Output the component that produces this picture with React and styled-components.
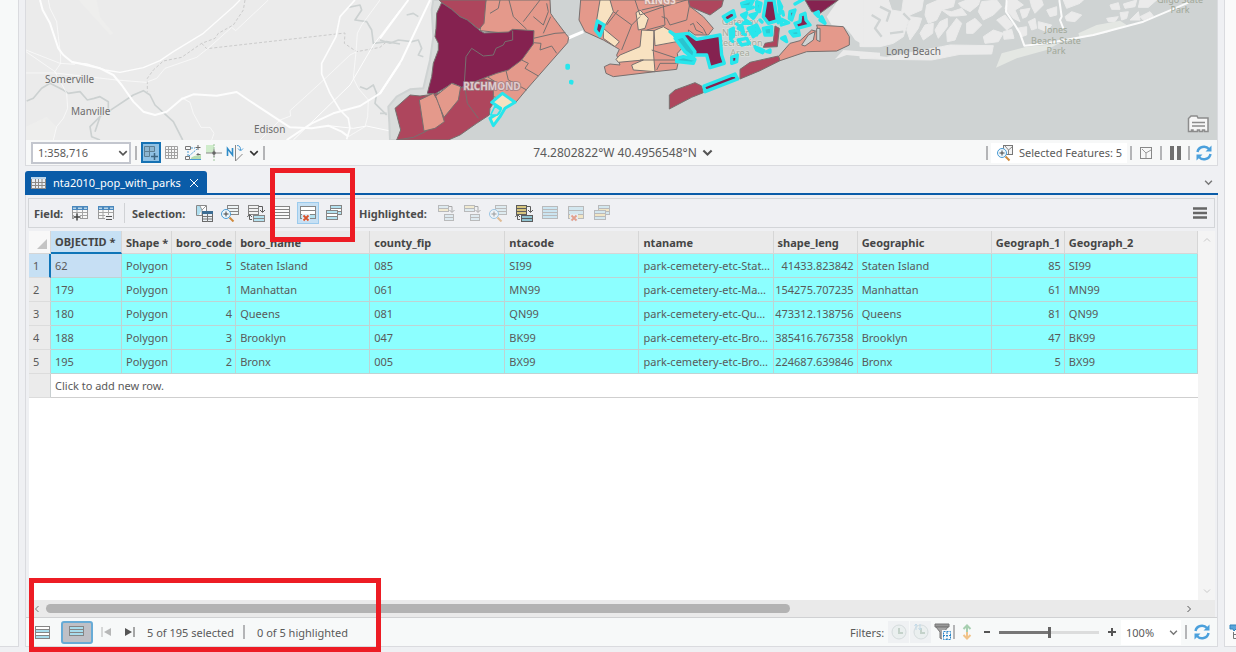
import React from "react";
import styled, { createGlobalStyle, css } from "styled-components";

const ink = "#5a5a5a";
const line = "#d3d5d8";
const blue = "#0a5ca8";

const Global = createGlobalStyle`
  *, *::before, *::after { box-sizing: border-box; }
  body { margin: 0; background: #eff0f3; overflow: hidden; }
  body, button, select, input { font-family: "Noto Sans", "Open Sans", sans-serif; font-size: 11px; color: ${ink}; }
`;

const Page = styled.div`
  display: flex;
  gap: 6px;
  min-height: 100vh;
  padding-bottom: 5px;
`;
const LeftDock = styled.aside`
  flex: 0 0 19px;
  background: #f7f9f9;
  border: 1px solid #dadbdf;
  border-width: 0 1px 1px 0;
`;
const RightDock = styled.aside`
  flex: 0 0 12px;
  display: flex;
  flex-direction: column;
  justify-content: flex-end;
  padding: 0 0 6px 4px;
  overflow: hidden;
  background: #fafafa;
  border: 1px solid #dadbdf;
  border-width: 0 0 1px 1px;
`;
const Main = styled.main`
  position: relative;
  flex: 1;
  min-width: 0;
  display: flex;
  flex-direction: column;
`;
const MapView = styled.section`
  display: flex;
  flex-direction: column;
  border: 1px solid #dadbdf;
  border-top: 0;
`;
const MapCanvas = styled.div`
  position: relative;
  height: 140px;
  overflow: hidden;
  background: #ebebeb;
`;
const MapSvg = styled.svg`
  display: block;
  width: 100%;
  height: 100%;
`;
const MapBadge = styled.button`
  position: absolute;
  right: 8px;
  bottom: 6px;
  width: 22px;
  height: 20px;
  padding: 0;
  border: 0;
  background: none;
`;
const ViewBar = styled.div`
  display: flex;
  align-items: center;
  height: 25px;
  padding: 0 2px 0 5px;
  background: #f7f8f8;
`;
const Sep = styled.span`
  flex: none;
  width: 2px;
  height: 14px;
  background: #b4b5b7;
`;
const Group = styled.div`
  display: flex;
  align-items: center;
  gap: ${(p) => p.$gap || 0}px;
  flex: ${(p) => (p.$grow ? "1 1 0" : "none")};
  justify-content: ${(p) => p.$align || "flex-start"};
`;
const Picker = styled.label`
  position: relative;
  display: flex;
  align-items: center;
  svg { position: absolute; right: 3px; pointer-events: none; }
`;
const Select = styled.select`
  appearance: none;
  width: ${(p) => p.$w}px;
  height: ${(p) => p.$h}px;
  padding: 0 0 0 5px;
  border: ${(p) => (p.$plain ? "0" : "2px solid #c3c6ce")};
  border-radius: 0;
  background: #fff;
`;
const ToolButton = styled.button`
  display: flex;
  align-items: center;
  justify-content: center;
  flex: none;
  width: ${(p) => p.$w || 22}px;
  height: ${(p) => p.$h || 22}px;
  padding: 0;
  border: 0;
  background: none;
  opacity: ${(p) => (p.disabled ? 0.5 : 1)};
  ${(p) => p.$on && css`background: #c6e0f4; border: 1px solid #9ccbed;`}
  ${(p) => p.$strong && css`background: #8fc1e4; border: 2px solid #1672b4;`}
  ${(p) => p.$tile && css`background: #e9ebee;`}
  ${(p) => p.$toggle && css`background: #bfc0c6; border: 2px solid #67abd6; border-radius: 3px;`}
`;
const TextButton = styled.button`
  display: flex;
  align-items: center;
  gap: 5px;
  height: 20px;
  padding: 0 5px;
  border: 0;
  background: ${(p) => (p.$white ? "#fff" : "none")};
  font-size: ${(p) => (p.$large ? 12 : 11)}px;
  white-space: nowrap;
`;
const TablePane = styled.section`
  flex: 1;
  display: flex;
  flex-direction: column;
  margin-top: 6px;
`;
const TabStrip = styled.div`
  display: flex;
  justify-content: space-between;
  align-items: center;
  height: 23px;
  padding-right: 2px;
  border-bottom: 2px solid ${blue};
`;
const Tab = styled.div`
  display: flex;
  align-items: center;
  gap: 6px;
  height: 23px;
  padding: 0 6px;
  border-radius: 3px 3px 0 0;
  background: ${blue};
  color: #fff;
`;
const PaneBody = styled.div`
  flex: 1;
  display: flex;
  flex-direction: column;
  border: 1px solid #dadbdf;
  border-top: 0;
`;
const ToolBar = styled.div`
  display: flex;
  align-items: center;
  height: 30px;
  margin: 3px 2px;
  padding: 0 3px 0 5px;
  background: #eff0f3;
  border: 1px solid ${line};
`;
const ToolLabel = styled.span`
  width: ${(p) => p.$w}px;
  font-weight: 700;
  white-space: nowrap;
  color: #4c4c4c;
`;
const ToolDivider = styled.span`
  width: 1px;
  height: 20px;
  margin: 0 7px;
  background: #d0d2d5;
`;
const GridArea = styled.div`
  flex: 1;
  display: flex;
  align-items: stretch;
  margin: 0 2px 0 3px;
  background: #fff;
`;
const GridScroller = styled.div`
  flex: 1;
  min-width: 0;
  overflow: hidden;
`;
const Table = styled.table`
  width: 100%;
  table-layout: fixed;
  border-collapse: separate;
  border-spacing: 0;
`;
const HeadCell = styled.th`
  height: 23px;
  padding: 0 0 0 4px;
  background: ${(p) => (p.$current ? "#c6e0f4" : "#eaeaea")};
  border-right: 1px solid #d6d6d6;
  border-bottom: ${(p) => (p.$current ? "2px solid #0f75b8" : "1px solid #d6d6d6")};
  text-align: left;
  white-space: nowrap;
  color: #454545;
`;
const CornerCell = styled(HeadCell)`
  padding: 4px 3px 0 0;
  background: #f8f8f8;
  svg { display: block; margin-left: auto; }
`;
const RowHead = styled.th`
  height: 24px;
  padding: 0 0 0 4px;
  background: ${(p) => (p.$current ? "#c6e0f4" : "#ebebeb")};
  border-right: ${(p) => (p.$current ? "2px solid #0f75b8" : "1px solid #c9cfd0")};
  border-bottom: 1px solid #dcdcdc;
  text-align: left;
  font-weight: 400;
`;
const Cell = styled.td`
  height: 24px;
  padding: ${(p) => (p.$num ? "0 3px 0 0" : "0 2px 0 4px")};
  background: ${(p) => (p.$current ? "#c6dff4" : "#8cffff")};
  border-right: 1px solid #bfd3d3;
  border-bottom: 1px solid #bfd3d3;
  text-align: ${(p) => (p.$num ? "right" : "left")};
  white-space: nowrap;
  overflow: hidden;
  text-overflow: ellipsis;
`;
const NewRowCell = styled.td`
  height: 24px;
  padding: 0 4px;
  border-bottom: 1px solid #cfcfcf;
`;
const VScroll = styled.div`
  flex: 0 0 17px;
  display: flex;
  flex-direction: column;
  justify-content: space-between;
  align-items: center;
  padding: 5px 0;
  background: #f4f4f4;
`;
const HScroll = styled.div`
  display: flex;
  align-items: center;
  gap: 5px;
  height: 17px;
  margin: 0 2px;
  padding: 0 22px 0 5px;
  background: #eaeaea;
`;
const HTrack = styled.div`
  flex: 1;
  display: flex;
`;
const HThumb = styled.div`
  width: 65.6%;
  height: 9px;
  border-radius: 5px;
  background: #b3b3b3;
`;
const StatusBar = styled.div`
  display: flex;
  align-items: center;
  height: 29px;
  padding: 0 4px 0 6px;
  border-top: 1px solid #d0d1d3;
  background: #f7f9f9;
  white-space: nowrap;
`;
const StatusText = styled.span`
  width: ${(p) => p.$w}px;
`;
const Slider = styled.input`
  appearance: none;
  width: 100px;
  height: 12px;
  margin: 0 4px;
  background: linear-gradient(to right, #777 50%, #dcdddd 50%) center / 100% 3px no-repeat;
  &::-webkit-slider-thumb {
    appearance: none;
    width: 3px;
    height: 11px;
    background: #666;
  }
`;
const Callout = styled.div`
  position: absolute;
  border: 5px solid #ed1c24;
  pointer-events: none;
  ${(p) => p.$at === "tools"
    ? css`left: 245px; top: 168px; width: 85px; height: 74px;`
    : css`left: 4px; bottom: -5px; width: 352px; height: 74px;`}
`;

/* ---------- icons ---------- */
const Icon = ({ w = 18, h = 18, children }) => (
  <svg width={w} height={h} viewBox={`0 0 ${w} ${h}`} fill="none" aria-hidden="true">{children}</svg>
);
const Chevron = ({ dir = "down", color = "#555", s = 8, t = 1.3 }) => {
  const turn = { down: 0, up: 180, left: 90, right: -90 }[dir];
  return (
    <svg width={s} height={s} viewBox="0 0 8 8" fill="none" aria-hidden="true">
      <path d="M1 2.5 4 5.5 7 2.5" stroke={color} strokeWidth={t} transform={`rotate(${turn} 4 4)`} />
    </svg>
  );
};
const Rows = ({ x, y, w, n, step = 4, fills, stroke = "#858585" }) => (
  <g stroke={stroke} shapeRendering="crispEdges">
    {Array.from({ length: n }, (_, i) => (
      <rect key={i} x={x + 0.5} y={y + 0.5 + i * step} width={w - 1} height={step} fill={fills[i % fills.length]} />
    ))}
  </g>
);
const FieldIcon = ({ mark }) => (
  <Icon>
    <rect x="1.5" y="2.5" width="15" height="12" fill="#f8f8f8" stroke="#999" />
    <path d="M1 2h16v4H1z" fill="#4a88bd" />
    <path d="M2 3.500h3v1.500H2zM7 3.500h4v1.500H7zM13 3.500h3v1.500h-3z" fill="#b9d6ea" />
    <path d="M2 8.500h14M2 11.500h14M6 6v8M11.500 6v8" stroke="#a5a5a5" />
    {mark === "add" ? (
      <><path d="M3 10h6v7H3z" fill="#eff0f3" /><path d="M6 9.500v7M2.500 13h7" stroke="#444" strokeWidth="1.500" /></>
    ) : (
      <><path d="M8 11h8v6H8z" fill="#eff0f3" /><path d="M9 12.500h6M9 15.500h6" stroke="#555" /></>
    )}
  </Icon>
);
const SelectByAttr = () => (
  <Icon>
    <path d="M1.500 1.500h10v10h-10z" fill="#fff" stroke="#888" />
    <path d="M2 2h3l2 4-3 5H2z" fill="#b0dff0" /><path d="M5 2l2 4 4-4M7 6v5" stroke="#999" />
    <rect x="7.500" y="7.500" width="10" height="10" fill="#e9eff3" stroke="#6a6a6a" />
    <path d="M7 7h11v3H7z" fill="#3d6d93" /><path d="M8 12.500h9M8 15h9M12.500 10v8" stroke="#777" />
  </Icon>
);
const Magnifier = ({ x, y }) => (
  <g transform={`translate(${x} ${y})`}>
    <path d="M8.500 8.500l4 4" stroke="#d08a3c" strokeWidth="2" />
    <circle cx="5" cy="5" r="4.500" fill="#eef7fc" stroke="#4a9bd4" />
    <path d="M5 2.500v5M2.500 5h5" stroke="#444" />
  </g>
);
const ZoomRows = ({ fill = "#eef4f6" }) => (
  <Icon><Rows x={6} y={1} w={12} n={3} step={3} fills={[fill]} /><Magnifier x={0} y={5} /></Icon>
);
const Switch = ({ fills = ["#f2f2f2", "#b4e2f0"], stroke }) => (
  <Icon>
    <Rows x={1} y={1} w={11} n={3} step={3} fills={[fills[0]]} stroke={stroke} />
    <Rows x={6} y={11} w={12} n={2} step={3} fills={[fills[1]]} stroke={stroke} />
    <path d="M12 2.500h3.500V8M13 6l2.500 2.500L18 6M5 15.500H2.500V11M0.300 13l2.200-2.500L5 13" stroke="#5c5c5c" />
  </Icon>
);
const MoveRows = ({ fills }) => (
  <Icon>
    <Rows x={1} y={1} w={11} n={2} step={3} fills={fills} />
    <Rows x={7} y={10} w={10} n={2} step={3} fills={["#cfe6ee"]} />
    <path d="M12 2.500h3V8M12.500 6l2.500 2.500L17.500 6" stroke="#666" />
  </Icon>
);
const SelectAll = ({ fill = "#fafafa" }) => (
  <Icon><Rows x={1} y={2} w={16} n={4} step={3} fills={[fill]} /></Icon>
);
const ClearRows = ({ fills = ["#fff", "#fff", "#b4e2f0"] }) => (
  <Icon>
    <Rows x={1} y={2} w={16} n={3} step={4} fills={fills} />
    <path d="M3 10h8v7H3z" fill="#dfe9f2" />
    <path d="M4.500 11.500l5 5M9.500 11.500l-5 5" stroke="#d9532c" strokeWidth="1.800" />
  </Icon>
);
const StackRows = ({ fills = ["#b4e2f0", "#fff"] }) => (
  <Icon>
    <Rows x={5} y={1} w={12} n={3} step={3} fills={fills} />
    <Rows x={1} y={6} w={12} n={3} step={3} fills={fills} />
  </Icon>
);
const Refresh = () => (
  <Icon>
    <path d="M2.500 8C3.500 2.500 10.500 1 14 5M15.500 10c-1 5.500-8 7-11.500 3" stroke="#4ba0dc" strokeWidth="2.500" />
    <path d="M16.500 1.500v6H10.500zM1.500 16.500v-6h6z" fill="#4ba0dc" />
  </Icon>
);
const TableIcon = () => (
  <Icon w={16} h={14}>
    <rect x="0.500" y="1.500" width="14" height="11" fill="#e8eef4" stroke="#8e8a86" />
    <path d="M0 1h15v2H0z" fill="#bcd7ec" />
    <path d="M1 6.500h13M1 9.500h13M4.500 3v9M7.500 3v9M11 3v9" stroke="#8e8a86" />
  </Icon>
);
const Panes = () => (
  <Icon w={16} h={18}>
    <path d="M1.500 2.500h5v5h-5zM6.500 2.500h5v5h-5zM1.500 7.500h5v5h-5z" stroke="#5d7f93" fill="#8db6d0" />
    <path d="M11.500 9v7M8 12.500h7" stroke="#3d6580" strokeWidth="1.500" />
  </Icon>
);
const Lattice = () => (
  <Icon><path d="M2.500 2.500h12v12h-12zM5.500 2v12M8.500 2v12M11.500 2v12M2 5.500h12M2 8.500h12M2 11.500h12" stroke="#a2a2a2" /></Icon>
);
const Snapping = () => (
  <Icon>
    <path d="M1.500 2.500h5v3h-5zM1.500 12.500h4v3h-4z" stroke="#777" />
    <path d="M7 4h4M4 12V6M5 12l8-7" stroke="#4a9bd4" strokeDasharray="2 1" />
    <path d="M14 1v5M11.500 3.500h5M14 9v3M12.500 10.500h4" stroke="#666" />
    <path d="M7 14c3-3 6-2 10-3v5H7z" fill="#b5dcb0" /><path d="M6 15.500h11" stroke="#4a9bd4" />
  </Icon>
);
const GridOrigin = () => (
  <Icon><path d="M1 1h8v8H1z" fill="#cfeccb" /><path d="M9 0v17" stroke="#9cc49a" strokeDasharray="2 1" /><path d="M1 9h16M9 5v8" stroke="#888" /><circle cx="9" cy="9" r="1.800" fill="#666" /></Icon>
);
const NorthUp = () => (
  <Icon>
    <path d="M1.500 12V4.500l5 6.500V4" stroke="#2f8cc8" strokeWidth="1.600" />
    <path d="M9.500 1v16l7-7" stroke="#888" /><path d="M9.500 1v15" stroke="#888" />
    <path d="M11 1.500c3 0 3.500 2 3.500 4.500M12 4.500L14.500 7 17 4.500" stroke="#4a9bd4" />
  </Icon>
);
const FeatureZoom = () => (
  <Icon><rect x="7.500" y="1.500" width="9" height="9" fill="#f4f4f4" stroke="#777" /><path d="M9 2l3.500 4L16 3M12.500 6v4" stroke="#888" /><Magnifier x={1} y={4} /></Icon>
);
const MapFrame = () => (
  <Icon w={14} h={14}><rect x="1.500" y="1.500" width="11" height="11" stroke="#888" /><path d="M3 3l4 4v5M7 7l5-3" stroke="#999" /></Icon>
);
const Funnel = () => (
  <Icon>
    <path d="M1 1h14v3H1z" fill="#999" stroke="#777" /><path d="M2 4h12l-4 5v8l-4-2V9z" fill="#a5a5a5" stroke="#777" />
    <path d="M8 7h10v11H8z" fill="#f7f9f9" /><path d="M9.500 8.500h7v8h-7zM13 9v8M9 12.500h8" stroke="#2b86c8" strokeDasharray="2 1" />
  </Icon>
);
const ClockIcon = ({ arrows }) => (
  <Icon><circle cx="9" cy="9" r="7" fill="#dfe7e6" stroke="#b4bfc2" /><path d="M9 5v5h4" stroke="#93ac9c" strokeWidth="2" />{arrows && <path d="M4 1v6M8 1v6M2.500 3L4 1l1.500 2M6.500 5L8 7l1.500-2" stroke="#8db9d6" />}</Icon>
);
const UpDown = () => (
  <Icon w={12}><path d="M6 4v5" stroke="#a7cfb0" strokeWidth="2" /><path d="M2.500 6L6 2.500 9.500 6" stroke="#a7cfb0" strokeWidth="2" /><path d="M6 9v5" stroke="#f1c389" strokeWidth="2" /><path d="M2.500 12L6 15.500 9.500 12" stroke="#f1c389" strokeWidth="2" /></Icon>
);

/* ---------- map ---------- */
const salmon = "#e4998b";
const crimson = "#ae465d";
const plum = "#852250";
const cream = "#f8e2c1";
const water = "#cfd3d3";
const land = "#ebebeb";

const roads = [
  ["M120 0L128 30 150 70 175 145 190 165 215 185 300 205 340 225 365 255 400 305 430 335 465 345 500 335 545 297 580 283 650 287 710 276 745 300 870 382 935 385 985 377 1025 395 1045 410", 6],
  ["M215 188L260 192 315 210 360 217 430 203 480 182 520 155 610 100 700 20 720 0", 4],
  ["M145 0L150 25 170 65 182 170 182 190 165 215M78 150L180 190 225 193M78 155L165 215 200 280 203 325 190 355 170 380 160 420M78 219H165L350 240 438 247 470 235 495 205 590 172 630 140 695 82 707 92 805 0", 2],
  ["M545 293L570 307 580 340 603 382 630 382 642 400 635 420M780 420L840 360 872 348 870 332 960 250 1050 165 1070 155M1140 0L1085 75 1072 100 1068 155 1060 235 1075 265 1105 300 1103 350 1095 380 1045 410", 2],
  ["M1065 0L1020 50 1008 110 965 190 965 222 990 280 1020 330 1045 355 1050 385 1040 418", 5],
  ["M860 420L935 370 1000 340 1080 318 1140 280 1200 190", 6],
  ["M880 420L1050 255 1120 135 1200 30M985 377L1060 385 1100 378 1180 395", 3],
];
const streams = [
  "M80 303L100 295 125 265 150 250 190 270 205 280 240 275 262 300 282 295 300 290 325 305 325 325 300 350 285 395M325 335L400 285 430 272 450 285 465 315 520 365 548 420M300 350L270 380 275 410 300 420",
  "M1045 22L1080 15 1085 30 1065 60 1100 65 1115 90 1120 130 1160 125 1200 132M1080 260L1100 268 1120 255 1130 280 1125 310 1160 345",
];
const marsh = [
  "M0 0H85L95 30 125 35 130 0H190L185 30 150 45 130 110 100 130 60 140 0 140Z",
  "M150 50L185 55 175 85 150 120 140 90ZM200 15L235 0H285L280 20 245 30 230 60 205 70 195 45ZM195 75L220 70 218 100 190 120 180 100ZM225 90L240 65 262 55 262 80 235 115ZM260 95L290 55 305 70 285 120 262 125ZM245 30L275 35 305 25 320 45 290 48 270 48Z",
  "M295 10L320 0H360L355 15 330 35 305 22ZM365 5L410 0 425 20 400 45 370 60 355 35ZM410 60L435 45 460 75 440 90ZM320 70L345 55 365 75 340 100 320 100ZM370 110L400 90 430 100 415 125 375 130ZM430 95L455 88 462 115 432 118Z",
  "M445 0H470L490 15 465 30 480 65 460 55 435 25ZM480 30L510 25 500 50 488 55ZM510 0H545L550 15 525 40 515 20ZM470 85L500 80 500 105 485 110ZM505 65L525 55 530 85 515 90ZM535 65L575 75 560 95 535 85ZM560 30L590 20 590 45 570 50Z",
  "M610 0H670L660 10 620 25ZM615 50L635 35 665 45 645 65 620 62ZM750 15L775 8 780 28 755 28ZM790 12L830 0 825 20 795 25ZM740 55L775 50 765 65 745 65ZM780 38L805 35 800 55 785 60ZM810 60L835 35 840 60ZM840 0H890L865 22 835 22ZM840 50L870 35 880 48 850 60Z",
  "M0 165L80 172 245 140 270 135 400 137 395 162 300 163 215 180 80 178 0 175Z",
];
const statenParts = [
  [salmon, "M318 0H510L512 40 520 52 556 100 566 112 563 128 475 228 440 268 405 310 340 290 300 230 380 100 300 92Z"],
  [crimson, "M178 0H318L312 70 297 88 262 60 240 50 215 28 185 8Z"],
  [crimson, "M45 325L90 285 120 288 165 282 245 262 310 235 322 240 348 245 340 275 340 310 330 325 328 345 290 370 240 405 205 420H50L62 390Z"],
  [plum, "M170 40L185 8 215 28 240 50 262 60 300 92 312 99 385 96 398 88 462 92 460 132 425 180 385 210 350 220 310 235 245 262 218 250 165 282 142 280 155 230 160 190 175 150 175 130 165 110 168 85Z"],
  [salmon, "M118 300L160 280 175 305 193 365 165 385 132 393Z"],
  [salmon, "M167 288L215 250 242 260 235 300 192 352 175 310Z"],
];
const statenLines = [
  "M398 92V120L375 125 370 135 348 145 340 165 310 168 275 145 258 170 253 250 262 310 295 355M360 0L355 25 330 40M387 0L400 50 440 88M480 0L430 65M460 50L490 75 505 35 500 10M512 50L490 100M460 115L525 100 556 98M460 128L483 130 480 150 515 138 530 160M425 180L445 190 435 205 475 228M378 212L385 240 440 270M322 230L345 245 M50 420L100 412 140 393",
];
const kingsParts = [
  [salmon, "M62 0H385L388 18 430 50 460 85 445 105 405 105 385 90 390 115 370 140 352 160 355 185 350 208 285 215 160 230 138 220 133 200 150 192 180 195 170 165 178 148 130 120 75 95 57 60Z"],
  [cream, "M120 0H150L160 35 130 85 110 60ZM130 85L178 125 165 140 130 115ZM228 38L240 30 265 55 255 85 235 90ZM168 178L180 165 240 140 245 90 282 92 280 155 285 215 220 210 215 195 250 180 175 187ZM282 92L310 80 335 95 350 125 285 137Z"],
  [crimson, "M385 0H490L485 20 450 45 390 20Z"],
];
const kingsLines = "M160 35L215 75 185 150M215 75L240 50M225 0L240 45 305 22 380 0M245 30L310 15 315 75 260 90M140 75L175 30M305 50L320 55 330 75 380 60 388 18M275 150L350 175M240 180H360M350 190H300L290 210M390 75L400 70 408 90 430 100M410 65L430 85 440 105";
const rockaway = [
  [salmon, "M655 170L690 130 720 122 755 90 775 95 770 75 850 80 868 110 868 135 830 153 740 155 660 182Z"],
  [crimson, "M328 285L345 270 405 248 425 258 430 278 395 292 328 327ZM540 208L570 187 655 168 660 182 600 212 540 237ZM645 78L658 85 652 140 610 142 615 130 640 125Z"],
  [plum, "M735 0H835L780 40 755 35Z"],
];
const parks = [
  [plum, "M330 95L345 105 385 100 410 118 480 105 485 165 493 190 450 203 440 165 405 165 375 130Z"],
  ["#2ac4cf", "M345 115L370 108 405 155 400 175 375 155ZM350 175L370 170 405 178 400 190 350 185Z"],
  [plum, "M112 63L132 75 120 108 106 90Z"],
  [plum, "M432 258L525 222 533 237 435 275ZM490 50L520 32 525 50 500 65ZM618 0H642L652 62 625 70 610 50ZM705 70L720 65 722 45 735 40 738 60 750 75 712 85ZM585 140L612 152 608 158 590 150ZM515 172L532 165 530 185 515 190ZM690 35L705 30 695 60 688 55Z"],
  ["#2cc9d1", "M545 10L575 0H580L570 20 548 20ZM590 5L603 10 598 35 590 30ZM545 45L560 38 555 55ZM570 45L590 40 580 55ZM565 85L590 75 600 95 580 110ZM610 85L635 80 635 105 615 105ZM690 95L715 90 718 105 700 108ZM655 0L665 20 660 40ZM665 115L675 110 680 125ZM510 90L520 85 520 110 512 115ZM535 85L545 75 550 95ZM765 40L775 35 775 50ZM780 60L795 70 785 50ZM620 155L630 150V157ZM550 70L560 62 572 70ZM705 12L730 -2ZM575 90L595 85 590 105ZM655 45L662 60 655 68ZM668 35L670 45ZM530 72L538 78ZM600 60L606 66ZM562 28L580 22ZM548 100L556 104ZM512 118L518 124Z"],
  [water, "M535 120L560 115 568 130 545 135ZM665 58L686 68 664 75Z"],
  ["#37e3e8", "M21 196h4v8h-4zM32 244l4 1-1 4-3-1z"],
];

const Label = ({ x, y, children, size = 10, fill = "#6c6c6c", weight = 400, anchor = "start", halo = "none" }) => (
  <text x={x} y={y} fontSize={size} fill={fill} fontWeight={weight} textAnchor={anchor}
    stroke={halo} strokeWidth="1.500" paintOrder="stroke" fontFamily='"Noto Sans", sans-serif'>{children}</text>
);

const third = 1 / 3;
const CityMap = () => (
  <MapSvg viewBox="26 0 1191 140" preserveAspectRatio="xMidYMid slice" role="img" aria-label="Neighborhood map">
    <rect x="26" width="1191" height="140" fill={land} />
    <g transform={`scale(${third})`} fill="none" strokeLinejoin="round">
      <path d="M235 0L330 105 340 100 300 50 290 0ZM78 380L140 350 170 380 160 420H78Z" fill="#eeeeed" />
      {streams.map((d) => <path key={d} d={d} stroke="#ccd1d1" strokeWidth="5" />)}
      <path d="M735 0L730 30 700 75 655 100 645 115 605 130 545 172 490 183 460 210 442 235 442 275M605 130L620 146 1035 99 1033 130 1070 155 1140 142 1160 125" stroke="#cbcbcb" strokeWidth="3" strokeDasharray="9 6" />
      {roads.map(([d, w]) => <path key={d} d={d} stroke="#fdfdfd" strokeWidth={w} />)}
    </g>
    <g transform={`translate(380 0) scale(${third})`} fill="none" strokeLinejoin="round">
      <path d="M0 120L30 130 55 120 95 125 115 120 125 145 115 165 130 170M80 45L100 40 115 50M0 340H20" stroke="#cdd2d2" strokeWidth="5" />
      <path d="M160 0L155 30 160 110 150 180 130 265 90 268 50 290 25 320 28 370 30 420H900V0Z" fill="#d9dcdb" stroke="#cfd3d3" strokeWidth="6" />
      <path d="M180 0V420H1500V0Z" fill={water} />
      <path d="M150 0L65 180 0 280M85 0L0 115" stroke="#fff" strokeWidth="6" />
      <path d="M565 114L610 95" stroke="#fff" strokeWidth="9" />
      {statenParts.map(([f, d]) => <path key={d} d={d} fill={f} stroke="#77706f" strokeWidth="3" />)}
      {statenLines.map((d) => <path key={d} d={d} stroke="#77706f" strokeWidth="3" />)}
      <path d="M335 307L367 280 405 307 375 325 360 350 340 377 330 355 355 340 362 325Z" fill={cream} stroke="#28e6ec" strokeWidth="9" />
      <path d="M345 318L362 330 352 345 332 345Z" fill={water} stroke="#28e6ec" strokeWidth="5" />
    </g>
    <rect x="820" width="397" height="140" fill={water} />
    <g transform={`translate(860 0) scale(${third})`} strokeLinejoin="round">
      {marsh.map((d) => <path key={d} d={d} fill={land} stroke={land} strokeWidth="3" />)}
      <path d="M35 45L60 60 45 85 65 110M90 100L130 95M60 20L90 35 80 65M130 40L150 60" fill="none" stroke={water} strokeWidth="7" />
      <path d="M0 146L80 158" stroke={water} strokeWidth="8" />
      <path d="M408 203L425 160 500 140 560 135 600 128 560 150 470 175ZM655 100L710 75 780 62 800 75 740 98 660 115Z" fill="#e4e7e3" />
      <path d="M440 0L438 35 465 75 480 100 493 137 560 130 700 105 850 65 985 8M598 0L605 50 600 60 610 85" fill="none" stroke="#fbfbfb" strokeWidth="6" />
    </g>
    <g transform={`translate(560 0) scale(${third})`} fill="none" strokeLinejoin="round">
      <path d="M835 0L800 50 815 75 855 82 875 105 885 120 910 135V0ZM825 178L850 150 960 158V175L860 165Z" fill={land} />
      {kingsParts.map(([f, d]) => <path key={d} d={d} fill={f} stroke="#77706f" strokeWidth="3" />)}
      <path d={kingsLines} stroke="#77706f" strokeWidth="3" />
      {rockaway.map(([f, d]) => <path key={d} d={d} fill={f} stroke="#77706f" strokeWidth="3" />)}
      <path d="M725 135L745 105 765 95 760 120 735 138ZM770 85H780V125L770 120Z" fill={water} stroke="#77706f" strokeWidth="3" />
    </g>
    <g>
      <Label x="740" y="25" size={9} anchor="middle" fill="#a4aa9e" halo="#dde0dc">Gateway</Label>
      <Label x="740" y="36" size={9} anchor="middle" fill="#a4aa9e" halo="#dde0dc">National</Label>
      <Label x="740" y="46" size={9} anchor="middle" fill="#a4aa9e" halo="#dde0dc">Recreation</Label>
      <Label x="740" y="56" size={9} anchor="middle" fill="#a4aa9e" halo="#dde0dc">Area</Label>
    </g>
    <g transform={`translate(560 0) scale(${third})`} strokeLinejoin="round" strokeLinecap="round" stroke="#28e6ec" strokeWidth="10">
      {parks.map(([f, d]) => <path key={d} d={d} fill={f} />)}
    </g>
    <Label x="45" y="83" halo={land}>Somerville</Label>
    <Label x="71" y="115" halo={land}>Manville</Label>
    <Label x="254" y="133" halo={land}>Edison</Label>
    <Label x="886" y="55">Long Beach</Label>
    <Label x="492" y="90" weight={700} anchor="middle" fill="#e0cccf" halo="#a08084">RICHMOND</Label>
    <Label x="660" y="4" weight={700} anchor="middle" fill="#efdcd6" halo="#bd968c">KINGS</Label>
    <g>
      <Label x="1056" y="33" size={9} anchor="middle" fill="#a0a798">Jones</Label>
      <Label x="1056" y="44" size={9} anchor="middle" fill="#a0a798">Beach State</Label>
      <Label x="1056" y="54" size={9} anchor="middle" fill="#a0a798">Park</Label>
      <Label x="1180" y="3" size={9} anchor="middle" fill="#a0a798">Gilgo State</Label>
      <Label x="1180" y="13" size={9} anchor="middle" fill="#a0a798">Park</Label>
    </g>
  </MapSvg>
);

/* ---------- data ---------- */
const columns = [
  ["OBJECTID *", 71], ["Shape *", 50], ["boro_code", 64, true], ["boro_name", 134], ["county_fip", 135], ["ntacode", 134],
  ["ntaname", 134], ["shape_leng", 84, true], ["Geographic", 134], ["Geograph_1", 73, true], ["Geograph_2", 133],
];
const rows = [
  ["62", "Polygon", "5", "Staten Island", "085", "SI99", "park-cemetery-etc-Staten Island", "41433.823842", "Staten Island", "85", "SI99"],
  ["179", "Polygon", "1", "Manhattan", "061", "MN99", "park-cemetery-etc-Manhattan", "154275.707235", "Manhattan", "61", "MN99"],
  ["180", "Polygon", "4", "Queens", "081", "QN99", "park-cemetery-etc-Queens", "473312.138756", "Queens", "81", "QN99"],
  ["188", "Polygon", "3", "Brooklyn", "047", "BK99", "park-cemetery-etc-Brooklyn", "385416.767358", "Brooklyn", "47", "BK99"],
  ["195", "Polygon", "2", "Bronx", "005", "BX99", "park-cemetery-etc-Bronx", "224687.639846", "Bronx", "5", "BX99"],
];
const selectionTools = [
  ["Select by attributes", <SelectByAttr />], ["Zoom to selection", <ZoomRows />], ["Switch selection", <Switch />],
  ["Select all", <SelectAll />], ["Clear selection", <ClearRows />, true], ["Copy rows", <StackRows />],
];
const tint = ["#f3e6ae", "#cfe8ef"];
const highlightTools = [
  ["Unselect highlighted", <MoveRows fills={["#cfe6ee", "#f3e6ae"]} />], ["Reselect highlighted", <MoveRows fills={tint} />],
  ["Zoom to highlighted", <ZoomRows fill="#cfe8ef" />], ["Switch highlight", <Switch fills={["#d6c57e", "#8fc3cf"]} stroke="#5c5c5c" />, true],
  ["Highlight all", <SelectAll fill="#a8dcf0" />], ["Clear highlight", <ClearRows fills={["#b8e0ec", "#b8e0ec", "#f3dc96"]} />],
  ["Copy highlighted", <StackRows fills={["#b8e0ec", "#f3dc96", "#b8e0ec"]} />],
];

export default function App() {
  return (
    <>
      <Global />
      <Page>
        <LeftDock />
        <Main>
          <MapView>
            <MapCanvas>
              <CityMap />
              <MapBadge aria-label="Map notes">
                <Icon w={22} h={20}>
                  <path d="M1.500 17.500V4.500L4 2h6l1 2h10v13.500h-3.500V16h-2v1.500h-3V16h-2v1.500H6V16H4.500v1.500z" fill="#f6f6f6" stroke="#8c8c8c" strokeWidth="1.500" />
                  <path d="M5 8.500h13M5 12h13" stroke="#8c8c8c" strokeWidth="1.500" />
                </Icon>
              </MapBadge>
            </MapCanvas>
            <ViewBar>
              <Group $grow>
                <Picker>
                  <Select $w={100} $h={22} aria-label="Map scale"><option>1:358,716</option></Select>
                  <Chevron s={10} />
                </Picker>
                <Group $gap={4}><span /><Sep />
                  <ToolButton $w={20} $h={21} $strong aria-label="Panes"><Panes /></ToolButton>
                </Group>
                <ToolButton $w={21} aria-label="Grid"><Lattice /></ToolButton>
                <ToolButton $w={21} aria-label="Snapping"><Snapping /></ToolButton>
                <ToolButton $w={21} aria-label="Origin"><GridOrigin /></ToolButton>
                <ToolButton $w={21} aria-label="North up"><NorthUp /></ToolButton>
                <ToolButton $w={18} aria-label="More"><Chevron s={10} color="#333" /></ToolButton>
                <Sep />
              </Group>
              <TextButton $large>74.2802822°W 40.4956548°N <Chevron s={11} t={1.5} /></TextButton>
              <Group $grow $align="flex-end" $gap={3}>
                <Sep />
                <TextButton $white><FeatureZoom />Selected Features: 5</TextButton>
                <Sep />
                <ToolButton aria-label="Map frame"><MapFrame /></ToolButton>
                <Sep />
                <ToolButton $w={20} aria-label="Pause drawing"><Icon w={12} h={14}><path d="M1 0h4v14H1zM8 0h4v14H8z" fill="#707070" /></Icon></ToolButton>
                <Sep />
                <ToolButton aria-label="Refresh map"><Refresh /></ToolButton>
              </Group>
            </ViewBar>
          </MapView>

          <TablePane>
            <TabStrip>
              <Tab>
                <TableIcon />
                nta2010_pop_with_parks
                <ToolButton $w={14} $h={14} aria-label="Close tab">
                  <Icon w={10} h={10}><path d="M1 1l8 8M9 1L1 9" stroke="#fff" /></Icon>
                </ToolButton>
              </Tab>
              <ToolButton $w={16} $h={16} aria-label="Tab list"><Chevron s={9} color="#777" /></ToolButton>
            </TabStrip>
            <PaneBody>
              <ToolBar>
                <ToolLabel $w={35}>Field:</ToolLabel>
                <Group $gap={4}>
                  <ToolButton aria-label="Add field"><FieldIcon mark="add" /></ToolButton>
                  <ToolButton aria-label="Calculate field"><FieldIcon mark="calc" /></ToolButton>
                </Group>
                <ToolDivider />
                <ToolLabel $w={61}>Selection:</ToolLabel>
                <Group $gap={4}>
                  {selectionTools.map(([name, icon, on]) => <ToolButton key={name} aria-label={name} $on={on}>{icon}</ToolButton>)}
                </Group>
                <Group $gap={14}><span />
                  <ToolLabel $w={76}>Highlighted:</ToolLabel>
                </Group>
                <Group $gap={4} $grow>
                  {highlightTools.map(([name, icon, live]) => <ToolButton key={name} aria-label={name} disabled={!live}>{icon}</ToolButton>)}
                </Group>
                <ToolButton aria-label="Menu"><Icon w={14} h={14}><path d="M0 2.500h14M0 7h14M0 11.500h14" stroke="#666" strokeWidth="2.500" /></Icon></ToolButton>
              </ToolBar>
              <GridArea>
                <GridScroller>
                  <Table>
                    <colgroup>
                      <col style={{ width: `${(22 / 1168) * 100}%` }} />
                      {columns.map(([name, w]) => <col key={name} style={{ width: `${(w / 1168) * 100}%` }} />)}
                    </colgroup>
                    <thead>
                      <tr>
                        <CornerCell aria-label="Row"><svg width="10" height="10"><path d="M10 0V10H0Z" fill="#c4c4c4" /></svg></CornerCell>
                        {columns.map(([name], i) => <HeadCell key={name} $current={i === 0}>{name}</HeadCell>)}
                      </tr>
                    </thead>
                    <tbody>
                      {rows.map((r, i) => (
                        <tr key={r[0]}>
                          <RowHead $current={i === 0}>{i + 1}</RowHead>
                          {r.map((v, c) => <Cell key={c} $num={columns[c][2]} $current={i === 0 && c === 0}>{v}</Cell>)}
                        </tr>
                      ))}
                      <tr>
                        <RowHead aria-label="New row" />
                        <NewRowCell colSpan={11}>Click to add new row.</NewRowCell>
                      </tr>
                    </tbody>
                  </Table>
                </GridScroller>
                <VScroll><Chevron dir="up" color="#c9c9c9" t={1} /><Chevron color="#c9c9c9" t={1} /></VScroll>
              </GridArea>
              <HScroll>
                <Chevron dir="left" color="#777" t={1} />
                <HTrack><HThumb /></HTrack>
                <Chevron dir="right" color="#555" t={1} />
              </HScroll>
              <StatusBar>
                <Group $gap={7}>
                  <ToolButton aria-label="Show all records"><Icon><Rows x={1} y={3} w={15} n={4} step={3} fills={["#fff", "#a8dcec"]} /></Icon></ToolButton>
                  <ToolButton $w={32} $h={23} $toggle aria-label="Show selected records"><Icon w={16} h={16}><Rows x={0} y={2} w={15} n={3} step={3} fills={["#a8dcec"]} /></Icon></ToolButton>
                </Group>
                <Group $gap={2}><span />
                  <ToolButton disabled aria-label="First record"><Icon w={12} h={10}><path d="M2 0v10" stroke="#777" /><path d="M11 1v8L4 5z" fill="#777" /></Icon></ToolButton>
                  <ToolButton aria-label="Last record"><Icon w={12} h={10}><path d="M10 0v10" stroke="#555" /><path d="M1 1v8l7-4z" fill="#555" /></Icon></ToolButton>
                </Group>
                <Group $gap={6}><span />
                  <StatusText $w={90}>5 of 195 selected</StatusText><Sep /><span />
                  <StatusText>0 of 5 highlighted</StatusText>
                </Group>
                <Group $grow $align="flex-end">
                  <StatusText $w={38}>Filters:</StatusText>
                  <Group $gap={1}>
                    <ToolButton $w={21} $tile disabled aria-label="Time filter"><ClockIcon /></ToolButton>
                    <ToolButton $w={21} $tile disabled aria-label="Range filter"><ClockIcon arrows /></ToolButton>
                    <ToolButton $w={21} aria-label="Extent filter"><Funnel /></ToolButton>
                  </Group>
                  <Sep />
                  <ToolButton $w={24} aria-label="Sort"><UpDown /></ToolButton>
                  <ToolButton $w={16} aria-label="Zoom out"><Icon w={8} h={8}><path d="M1 4h6" stroke="#555" strokeWidth="2" /></Icon></ToolButton>
                  <Slider type="range" min="0" max="200" defaultValue="100" aria-label="Table zoom" />
                  <ToolButton $w={18} aria-label="Zoom in"><Icon w={8} h={8}><path d="M0 4h8M4 0v8" stroke="#555" strokeWidth="2" /></Icon></ToolButton>
                  <Group $gap={4}>
                    <Picker>
                      <Select $w={60} $h={25} $plain aria-label="Zoom level"><option>100%</option></Select>
                      <Chevron s={9} color="#777" />
                    </Picker>
                    <Sep />
                    <ToolButton aria-label="Refresh table"><Refresh /></ToolButton>
                  </Group>
                </Group>
              </StatusBar>
            </PaneBody>
          </TablePane>
          <Callout $at="tools" />
          <Callout $at="status" />
        </Main>
        <RightDock>
          <Icon w={16} h={16}>
            <path d="M1 1h9v4H7L5 7 4 5H1z" fill="#5aa5da" stroke="#3184bd" /><path d="M4.500 8v6.500H11M5 10.500h6" stroke="#777" />
          </Icon>
        </RightDock>
      </Page>
    </>
  );
}
